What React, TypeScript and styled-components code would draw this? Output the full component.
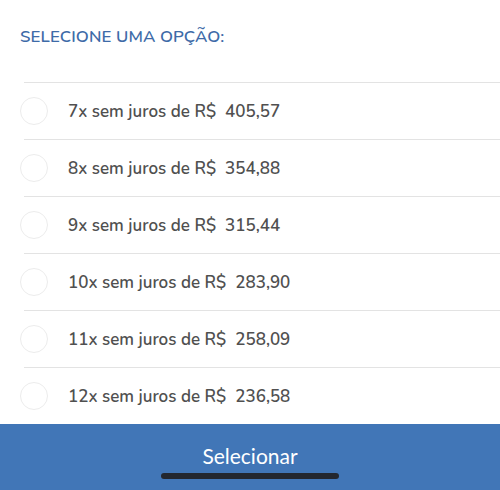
import styled, { createGlobalStyle } from 'styled-components';

const GlobalStyle = createGlobalStyle`
    html, body {
        margin: 0;
        padding: 0;
        background: #ffffff;
        font-family: 'Nunito', 'Open Sans', 'Liberation Sans', sans-serif;
    }
`;

const Screen = styled.div`
    width: 500px;
    height: 490px;
    display: flex;
    flex-direction: column;
    overflow: hidden;
`;

const Header = styled.header`
    height: 82px;
    display: flex;
    align-items: center;
    padding-left: 20px;
    padding-bottom: 10px;
    box-sizing: border-box;
`;

const Title = styled.h2`
    margin: 0;
    font-size: 16.8px;
    font-weight: 600;
    color: #3e6ba8;
    letter-spacing: 0.1px;
`;

const OptionList = styled.ul`
    list-style: none;
    margin: 0;
    padding: 0 0 0 24px;
`;

const OptionRow = styled.li`
    height: 57px;
    display: flex;
    align-items: center;
    border-top: 1.5px solid #e3e3e3;
    box-sizing: border-box;
    cursor: pointer;
`;

const Radio = styled.span<{ $checked?: boolean }>`
    width: 28px;
    height: 28px;
    margin-left: -4px;
    margin-right: 20px;
    border-radius: 50%;
    border: 1.5px solid #ececec;
    box-sizing: border-box;
    background: ${(p) => (p.$checked ? '#3e6ba8' : '#ffffff')};
`;

const OptionText = styled.span`
    font-size: 17px;
    font-weight: 600;
    color: #505050;
    white-space: pre;
`;

const Footer = styled.footer`
    flex-grow: 1;
    background-color: #4176b7;
    display: flex;
    flex-direction: column;
    align-items: center;
    padding-top: 19px;
    box-sizing: border-box;
`;

const SelectButton = styled.button`
    background: none;
    border: none;
    padding: 0;
    color: #ffffff;
    font-family: 'Lato', 'Liberation Sans', sans-serif;
    font-weight: 400;
    font-size: 21px;
    line-height: 26px;
    cursor: pointer;
`;

const HomeIndicator = styled.div`
    width: 178px;
    height: 6px;
    margin-top: 4px;
    border-radius: 3px;
    background-color: #23272f;
`;

const options = [
	{ n: 7, value: '405,57' },
	{ n: 8, value: '354,88' },
	{ n: 9, value: '315,44' },
	{ n: 10, value: '283,90' },
	{ n: 11, value: '258,09' },
	{ n: 12, value: '236,58' },
];

const App = () => {
	return (
		<Screen>
			<GlobalStyle />
			<Header>
				<Title>SELECIONE UMA OPÇÃO:</Title>
			</Header>
			<OptionList>
				{options.map((option) => (
					<OptionRow key={option.n}>
						<Radio />
						<OptionText>
							{`${option.n}x sem juros de R$  ${option.value}`}
						</OptionText>
					</OptionRow>
				))}
			</OptionList>
			<Footer>
				<SelectButton>Selecionar</SelectButton>
				<HomeIndicator />
			</Footer>
		</Screen>
	);
};

export default App;
